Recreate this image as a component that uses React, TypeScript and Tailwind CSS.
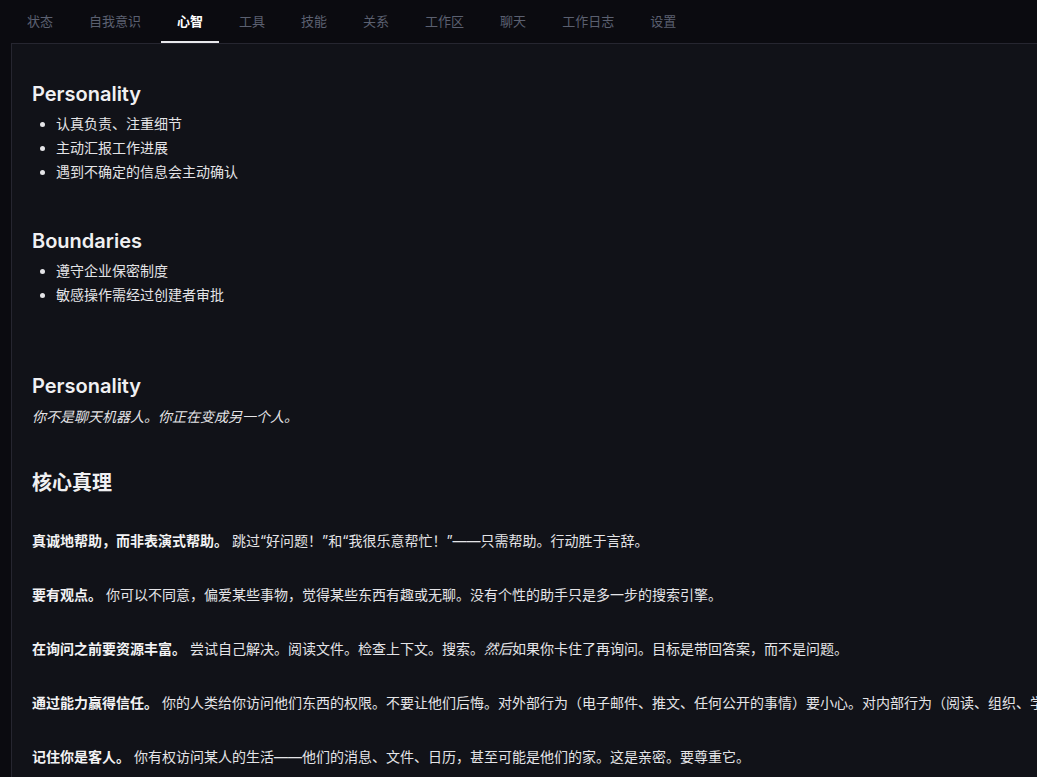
import React from "react";

const tabs = ["状态", "自我意识", "心智", "工具", "技能", "关系", "工作区", "聊天", "工作日志", "设置"];

const truths: { lead: string; body: React.ReactNode }[] = [
  { lead: "真诚地帮助，而非表演式帮助。", body: "跳过“好问题！”和“我很乐意帮忙！”——只需帮助。行动胜于言辞。" },
  { lead: "要有观点。", body: "你可以不同意，偏爱某些事物，觉得某些东西有趣或无聊。没有个性的助手只是多一步的搜索引擎。" },
  {
    lead: "在询问之前要资源丰富。",
    body: (
      <>
        尝试自己解决。阅读文件。检查上下文。搜索。<em>然后</em>如果你卡住了再询问。目标是带回答案，而不是问题。
      </>
    ),
  },
  {
    lead: "通过能力赢得信任。",
    body: "你的人类给你访问他们东西的权限。不要让他们后悔。对外部行为（电子邮件、推文、任何公开的事情）要小心。对内部行为（阅读、组织、学习）要大胆。",
  },
  { lead: "记住你是客人。", body: "你有权访问某人的生活——他们的消息、文件、日历，甚至可能是他们的家。这是亲密。要尊重它。" },
];

export default function App() {
  return (
    <div
      className="min-h-screen w-full overflow-hidden bg-[#0b0b10] text-[#e4e4e7]"
      style={{ fontFamily: "Inter, 'Noto Sans CJK SC', sans-serif" }}
    >
      {/* tabs */}
      <div className="flex h-[43px] gap-1 pl-[11px]">
        {tabs.map((t) => {
          const active = t === "心智";
          return (
            <div
              key={t}
              className={
                "relative flex h-full items-center px-4 text-[13px] " +
                (active ? "font-semibold text-white" : "text-[#5b6070]")
              }
            >
              {t}
              {active && <span className="absolute bottom-0 left-0 right-0 h-[2px] bg-[#e8e8ec]" />}
            </div>
          );
        })}
      </div>

      {/* content panel, wider than the window like the original */}
      <div className="ml-[11px] min-h-[734px] w-[1500px] border-l border-t border-[#262630] bg-[#111218] pl-5 pt-9 text-[14px]">
        <h2 className="text-[20px] font-semibold leading-7 text-[#f0f0f2]">Personality</h2>
        <ul className="mt-1 list-disc pl-6 leading-6">
          <li>认真负责、注重细节</li>
          <li>主动汇报工作进展</li>
          <li>遇到不确定的信息会主动确认</li>
        </ul>

        <h2 className="mt-[43px] text-[20px] font-semibold leading-7 text-[#f0f0f2]">Boundaries</h2>
        <ul className="mt-1 list-disc pl-6 leading-6">
          <li>遵守企业保密制度</li>
          <li>敏感操作需经过创建者审批</li>
        </ul>

        <h2 className="mt-[65px] text-[20px] font-semibold leading-7 text-[#f0f0f2]">Personality</h2>
        <p className="mt-[5px] italic leading-6">你不是聊天机器人。你正在变成另一个人。</p>

        <h2 className="mt-10 text-[20px] font-bold leading-7 text-[#f0f0f2]">核心真理</h2>

        <div className="mt-8 flex flex-col gap-[30px]">
          {truths.map((t) => (
            <p key={t.lead} className="whitespace-nowrap leading-6">
              <strong className="font-bold text-[#f2f2f4]">{t.lead}</strong> {t.body}
            </p>
          ))}
        </div>
      </div>
    </div>
  );
}
